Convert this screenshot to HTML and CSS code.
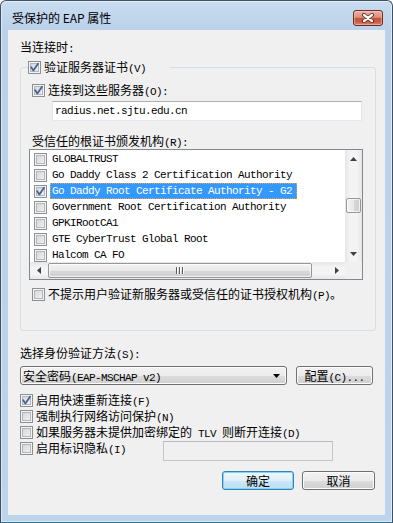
FILE: index.html
```html
<!DOCTYPE html>
<html lang="zh-CN">
<head>
<meta charset="utf-8">
<title>受保护的 EAP 属性</title>
<link rel="stylesheet" href="styles.css">
</head>
<body>
<div class="window">
  <div class="titlebar">
    <div class="title">受保护的 EAP 属性</div>
    <div class="close"><svg width="14" height="10" viewBox="0 0 14 10"><path class="x-out" d="M3 2 L11 8 M11 2 L3 8"/><path class="x-in" d="M3 2 L11 8 M11 2 L3 8"/></svg></div>
  </div>
  <div class="client">
    <div class="label"><span class="t">当连接时<span class="m">:</span></span></div>
    <fieldset class="group">
      <legend class="legend"><div class="cbrow"><span class="cb"><svg width="11" height="11" viewBox="0 0 11 11"><path class="tick" d="M2.2 5.3 L4.4 8.4 L9 1.8"/></svg></span><span class="t">验证服务器证书<span class="m">(V)</span></span></div></legend>
      <div class="cbrow servers"><span class="cb"><svg width="11" height="11" viewBox="0 0 11 11"><path class="tick" d="M2.2 5.3 L4.4 8.4 L9 1.8"/></svg></span><span class="t">连接到这些服务器<span class="m">(O):</span></span></div>
      <div class="textbox server-input">radius.net.sjtu.edu.cn</div>
      <div class="label trusted"><span class="t">受信任的根证书颁发机构<span class="m">(R):</span></span></div>
      <div class="listbox">
        <div class="list-body">
          <div class="items">
            <div class="item"><span class="cb"></span><span class="txt">GLOBALTRUST</span></div>
            <div class="item"><span class="cb"></span><span class="txt">Go Daddy Class 2 Certification Authority</span></div>
            <div class="item"><span class="cb"><svg width="11" height="11" viewBox="0 0 11 11"><path class="tick" d="M2.2 5.3 L4.4 8.4 L9 1.8"/></svg></span><span class="txt sel">Go Daddy Root Certificate Authority - G2</span></div>
            <div class="item"><span class="cb"></span><span class="txt">Government Root Certification Authority</span></div>
            <div class="item"><span class="cb"></span><span class="txt">GPKIRootCA1</span></div>
            <div class="item"><span class="cb"></span><span class="txt">GTE CyberTrust Global Root</span></div>
            <div class="item"><span class="cb"></span><span class="txt">Halcom CA FO</span></div>
          </div>
          <div class="vscroll">
            <div class="sbtn"><svg width="7" height="4" viewBox="0 0 7 4"><path class="arr" d="M0 4 L3.5 0 L7 4Z"/></svg></div>
            <div class="vtrack"><div class="vthumb"></div></div>
            <div class="sbtn"><svg width="7" height="4" viewBox="0 0 7 4"><path class="arr" d="M0 0 L3.5 4 L7 0Z"/></svg></div>
          </div>
        </div>
        <div class="hrow">
          <div class="hscroll">
            <div class="sbtn"><svg width="4" height="7" viewBox="0 0 4 7"><path class="arr" d="M4 0 L0 3.5 L4 7Z"/></svg></div>
            <div class="htrack"><div class="hthumb"><svg width="8" height="7" viewBox="0 0 8 7"><path class="grip-d" d="M0 0h1v7h-1z M3 0h1v7h-1z M6 0h1v7h-1z"/><path class="grip-l" d="M1 0h1v7h-1z M4 0h1v7h-1z M7 0h1v7h-1z"/></svg></div></div>
            <div class="sbtn"><svg width="4" height="7" viewBox="0 0 4 7"><path class="arr" d="M0 0 L4 3.5 L0 7Z"/></svg></div>
          </div>
          <div class="corner"></div>
        </div>
      </div>
      <div class="cbrow noprompt"><span class="cb"></span><span class="t">不提示用户验证新服务器或受信任的证书授权机构<span class="m">(P)</span>。</span></div>
    </fieldset>
    <div class="label method"><span class="t">选择身份验证方法<span class="m">(S):</span></span></div>
    <div class="method-row">
      <div class="select"><span class="t">安全密码<span class="m">(EAP-MSCHAP v2)</span></span><svg width="7" height="4" viewBox="0 0 7 4"><path class="arr-dark" d="M0 0 L3.5 4 L7 0Z"/></svg></div>
      <div class="btn config"><span class="t">配置<span class="m">(C)...</span></span></div>
    </div>
    <div class="options">
      <div class="cbrow"><span class="cb"><svg width="11" height="11" viewBox="0 0 11 11"><path class="tick" d="M2.2 5.3 L4.4 8.4 L9 1.8"/></svg></span><span class="t">启用快速重新连接<span class="m">(F)</span></span></div>
      <div class="cbrow"><span class="cb"></span><span class="t">强制执行网络访问保护<span class="m">(N)</span></span></div>
      <div class="cbrow"><span class="cb"></span><span class="t">如果服务器未提供加密绑定的<span class="m"> TLV </span>则断开连接<span class="m">(D)</span></span></div>
      <div class="privacy-row">
        <div class="cbrow"><span class="cb"></span><span class="t">启用标识隐私<span class="m">(I)</span></span></div>
        <div class="privacy-input"></div>
      </div>
    </div>
    <div class="buttons">
      <div class="btn default ok">确定</div>
      <div class="btn cancel">取消</div>
    </div>
  </div>
</div>
</body>
</html>
```

FILE: styles.css
```css
* { box-sizing: border-box; }
html, body { margin: 0; padding: 0; }
body {
  width: 393px;
  height: 523px;
  overflow: hidden;
  background: #fff;
  font-family: "Noto Sans CJK SC", "Liberation Sans", sans-serif;
  font-size: 12px;
  line-height: 16px;
  color: #000;
}
.t { white-space: pre; line-height: 16px; }
.m {
  font-family: "Liberation Mono", "Noto Sans CJK SC", monospace;
  font-size: 11px;
  line-height: 10px;
  letter-spacing: -0.6px;
  white-space: pre;
}
.window {
  width: 393px;
  height: 523px;
  border: 1px solid #3e5063;
  border-bottom-color: #2f6d94;
  border-radius: 6px 6px 0 0;
  background: linear-gradient(#c9dcf0, #bad1ea 30px, #bcd4ec);
  padding: 0 7px 7px;
  display: flex;
  flex-direction: column;
  box-shadow: inset 0 0 0 1px rgba(255, 255, 255, 0.5);
}
.titlebar {
  height: 29px;
  flex: none;
  display: flex;
  align-items: flex-start;
}
.title {
  flex: 1;
  margin: 9px 0 0 4px;
  line-height: 16px;
}
.close {
  margin: 9px 2px 0 0;
  width: 30px;
  height: 16px;
  border: 1px solid #6d2d25;
  border-radius: 3px;
  background: linear-gradient(#ebb4a7, #db8d7a 45%, #c8553f 52%, #c65b43 75%, #d9856c);
  box-shadow: inset 0 0 0 1px rgba(255, 215, 205, 0.45);
  display: flex;
  align-items: center;
  justify-content: center;
}
.x-out { stroke: #5b2b24; stroke-width: 4; stroke-linecap: round; fill: none; }
.x-in { stroke: #fff; stroke-width: 2.2; stroke-linecap: round; fill: none; }

.client {
  flex: 1;
  background: #f0f0f0;
  padding: 9px 10px 0 12px;
  display: flex;
  flex-direction: column;
}
.label { height: 16px; white-space: nowrap; }

.group {
  margin: 4px 0 0;
  padding: 0 0 28px;
  width: 356px;
  min-width: 0;
  border: 1px solid #d5dfe5;
  border-radius: 3px;
}
.legend {
  margin-left: 7px;
  padding: 0 24px 0 0;
  height: 16px;
}
.cbrow {
  display: flex;
  align-items: center;
  height: 16px;
  white-space: nowrap;
}
.cb {
  flex: none;
  width: 13px;
  height: 13px;
  margin-right: 3px;
  border: 1px solid #8e8f8f;
  background: linear-gradient(135deg, #cdd1d6, #f7f7f7);
  box-shadow: inset 0 0 0 1px #f4f4f4, inset 0 0 0 2px #b3b6bb;
  display: flex;
  align-items: center;
  justify-content: center;
}
.cb svg { display: block; }
.tick { fill: none; stroke: #4a5f97; stroke-width: 1.8; stroke-linecap: round; stroke-linejoin: round; }

.servers { margin: 7px 0 0 11px; }
.textbox {
  height: 20px;
  background: #fff;
  border: 1px solid;
  border-color: #abadb3 #e2e3ea #e3e9ef #e2e3ea;
  font-family: "Liberation Mono", monospace;
  font-size: 11px;
  letter-spacing: -0.6px;
  line-height: 18px;
  padding: 0 2px;
  white-space: nowrap;
}
.server-input { margin: 3px 0 0 31px; width: 310px; }
.trusted { margin: 12px 0 0 11px; }

.listbox {
  margin-left: 8px;
  width: 334px;
  height: 131px;
  border: 1px solid #828790;
  background: #fff;
  display: flex;
  flex-direction: column;
}
.list-body { flex: 1; min-height: 0; display: flex; }
.items {
  flex: 1;
  min-width: 0;
  overflow: hidden;
  padding-top: 1px;
  font-family: "Liberation Mono", monospace;
  font-size: 11px;
  letter-spacing: -0.6px;
}
.item {
  display: flex;
  align-items: center;
  height: 16px;
  padding-left: 4px;
  white-space: pre;
}
.txt {
  height: 16px;
  line-height: 14px;
  padding: 0 1px;
  border: 1px dotted transparent;
}
.txt.sel {
  background: #3399ff;
  color: #fff;
  border-color: #e8a050;
  padding-right: 4px;
}
.vscroll {
  flex: none;
  width: 17px;
  display: flex;
  flex-direction: column;
  background: linear-gradient(to right, #e6e6e6, #f4f4f4 30%, #f4f4f4 70%, #e6e6e6);
}
.sbtn {
  flex: none;
  width: 17px;
  height: 17px;
  display: flex;
  align-items: center;
  justify-content: center;
}
.arr { fill: #404040; }
.arr-dark { fill: #000; }
.vtrack { flex: 1; padding: 31px 1px 0; }
.vthumb {
  height: 15px;
  border: 1px solid #979797;
  border-radius: 2px;
  background: linear-gradient(to right, #f4f4f4, #e8e8e8 50%, #d8d8d8 51%, #cfcfcf);
  box-shadow: inset 0 0 0 1px rgba(255, 255, 255, 0.7);
}
.hrow { flex: none; height: 17px; display: flex; }
.hscroll {
  flex: 1;
  display: flex;
  background: linear-gradient(#e6e6e6, #f4f4f4 30%, #f4f4f4 70%, #e6e6e6);
}
.htrack { flex: 1; padding: 1px 0 1px 1px; }
.hthumb {
  width: 264px;
  height: 15px;
  border: 1px solid #979797;
  border-radius: 2px;
  background: linear-gradient(#f4f4f4, #e8e8e8 50%, #d8d8d8 51%, #cfcfcf);
  box-shadow: inset 0 0 0 1px rgba(255, 255, 255, 0.7);
  display: flex;
  align-items: center;
  justify-content: center;
}
.grip-d { fill: #5a5a5a; }
.grip-l { fill: #fbfbfb; }
.corner { flex: none; width: 17px; background: #f0f0f0; }
.noprompt { margin: 6px 0 0 11px; }

.method { margin-top: 14px; }
.method-row { display: flex; gap: 9px; margin-top: 5px; height: 19px; }
.btn {
  border: 1px solid #707070;
  border-radius: 3px;
  background: linear-gradient(#f2f2f2, #ebebeb 50%, #dddddd 51%, #cfcfcf);
  box-shadow: inset 0 0 0 1px #fcfcfc;
  display: flex;
  align-items: center;
  justify-content: center;
  white-space: nowrap;
}
.select {
  width: 267px;
  border: 1px solid #707070;
  border-radius: 3px;
  background: linear-gradient(#f2f2f2, #ebebeb 50%, #dddddd 51%, #cfcfcf);
  box-shadow: inset 0 0 0 1px #fcfcfc;
  display: flex;
  align-items: center;
  padding: 0 6px 0 2px;
  white-space: nowrap;
}
.select svg { margin-left: auto; }
.config { width: 77px; }
.options { margin-top: 7px; }
.privacy-row { display: flex; align-items: flex-start; }
.privacy-input {
  margin: 1px 0 0 37px;
  width: 170px;
  height: 20px;
  background: #f0f0f0;
  border: 1px solid #c2c5ca;
  border-top-color: #b5b8be;
}
.buttons {
  display: flex;
  justify-content: flex-end;
  gap: 8px;
  margin-top: 10px;
}
.buttons .btn { height: 19px; }
.ok { width: 72px; }
.cancel { width: 73px; }
.default {
  border-color: #3c7fb1;
  background: linear-gradient(#eef7fd, #e0f0fa 50%, #cce7f8 51%, #bedff4);
  box-shadow: inset 0 0 0 1px #7fd7f7;
}
```
